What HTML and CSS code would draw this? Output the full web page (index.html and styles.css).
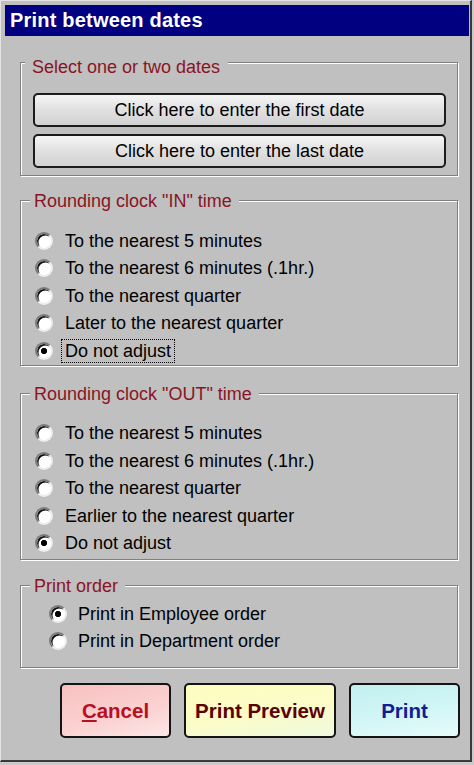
FILE: index.html
```html
<!DOCTYPE html>
<html>
<head>
<meta charset="utf-8">
<title>Print between dates</title>
<link rel="stylesheet" href="styles.css">
</head>
<body>
<div class="window">
  <div class="titlebar">Print between dates</div>
  <div class="content">
    <div class="group g-dates">
      <div class="legend">Select one or two dates</div>
      <div class="date-buttons">
        <button class="date-btn">Click here to enter the first date</button>
        <button class="date-btn">Click here to enter the last date</button>
      </div>
    </div>

    <div class="group g-round g-in">
      <div class="legend">Rounding clock "IN" time</div>
      <ul class="options">
        <li class="option"><span class="radio"></span><span class="label">To the nearest 5 minutes</span></li>
        <li class="option"><span class="radio"></span><span class="label">To the nearest 6 minutes (.1hr.)</span></li>
        <li class="option"><span class="radio"></span><span class="label">To the nearest quarter</span></li>
        <li class="option"><span class="radio"></span><span class="label">Later to the nearest quarter</span></li>
        <li class="option"><span class="radio checked"></span><span class="label focus">Do not adjust</span></li>
      </ul>
    </div>

    <div class="group g-round g-out">
      <div class="legend">Rounding clock "OUT" time</div>
      <ul class="options">
        <li class="option"><span class="radio"></span><span class="label">To the nearest 5 minutes</span></li>
        <li class="option"><span class="radio"></span><span class="label">To the nearest 6 minutes (.1hr.)</span></li>
        <li class="option"><span class="radio"></span><span class="label">To the nearest quarter</span></li>
        <li class="option"><span class="radio"></span><span class="label">Earlier to the nearest quarter</span></li>
        <li class="option"><span class="radio checked"></span><span class="label">Do not adjust</span></li>
      </ul>
    </div>

    <div class="group g-order">
      <div class="legend">Print order</div>
      <ul class="options">
        <li class="option"><span class="radio checked"></span><span class="label">Print in Employee order</span></li>
        <li class="option"><span class="radio"></span><span class="label">Print in Department order</span></li>
      </ul>
    </div>

    <div class="actions">
      <button class="act cancel"><u>C</u>ancel</button>
      <button class="act preview">Print Preview</button>
      <button class="act print">Print</button>
    </div>
  </div>
</div>
</body>
</html>
```

FILE: styles.css
```css
* { box-sizing: border-box; }
html, body { margin: 0; padding: 0; }
body {
  width: 474px;
  height: 765px;
  overflow: hidden;
  background: #cacaca;
  font-family: "Liberation Sans", Arial, sans-serif;
  font-size: 18px;
  color: #000;
}
.window {
  width: 472px;
  height: 762px;
  background: #c0c0c0;
  border-top: 1px solid #e4e4e4;
  border-left: 1px solid #e4e4e4;
  border-right: 2px solid #3a3a3a;
  border-bottom: 2px solid #3a3a3a;
  padding: 4px 1px 0 4px;
}
.titlebar {
  height: 31px;
  line-height: 31px;
  background: #000080;
  color: #fff;
  font-weight: bold;
  font-size: 20px;
  letter-spacing: 0.2px;
  padding-left: 5px;
}
.content { margin: 0 11px 0 15px; }

.group {
  border: 1px solid #808080;
  box-shadow: inset 1px 1px 0 #fff, 1px 1px 0 #fff;
}
.legend {
  display: table;
  background: #c0c0c0;
  color: #8a1424;
  line-height: 20px;
  padding: 0 7px 0 4px;
}

.g-dates { margin-top: 26px; padding: 0 11px 7px 12px; }
.g-dates .legend { margin: -6px 0 0 -8px; padding: 0 8px 0 7px; }
.date-buttons {
  display: flex;
  flex-direction: column;
  gap: 7px;
  margin-top: 16px;
}
.date-btn {
  height: 34px;
  margin: 0;
  padding: 0;
  border: 2px solid #1c1c1c;
  border-radius: 5px;
  background: linear-gradient(#f6f6f6, #e2e2e2 45%, #d2d2d2);
  font-family: "Liberation Sans", Arial, sans-serif;
  font-size: 18px;
  color: #000;
}

.options { list-style: none; margin: 16px 0 0; padding: 0; }
.g-round { padding: 0 0 0 14px; }
.g-round .legend { margin: -10px 0 0 -5px; }
.g-in { margin-top: 24px; }
.g-out { margin-top: 27px; padding-bottom: 2px; }
.option {
  display: flex;
  align-items: center;
  height: 27.5px;
  gap: 12px;
  white-space: nowrap;
}
.g-order { margin-top: 25px; padding: 0 0 12.5px 28px; }
.g-order .legend { margin: -10px 0 0 -19px; }
.g-order .options { margin-top: 4.5px; }
.g-order .option { height: 27px; gap: 11px; }

.radio {
  flex: none;
  width: 18px;
  height: 18px;
  border-radius: 50%;
  border: 2px solid;
  border-color: #7a7a7a #ececec #ececec #7a7a7a;
  background: #fff;
  box-shadow: inset 1.5px 1.5px 0 #111;
}
.radio.checked {
  background: radial-gradient(circle, #000 0 2.8px, #fff 3.4px);
}
.label { line-height: 20px; }
.focus {
  border: 1px dotted #000;
  padding: 1px 3px;
  margin-left: -4px;
}

.actions {
  display: flex;
  justify-content: flex-end;
  gap: 13px;
  margin: 15px -2px 0 0;
}
.act {
  height: 55px;
  margin: 0;
  padding: 0;
  border: 2px solid #141414;
  border-radius: 5px;
  font-family: "Liberation Sans", Arial, sans-serif;
  font-weight: bold;
  font-size: 20.5px;
}
.cancel {
  width: 111px;
  background: linear-gradient(165deg, #f7c0c0, #fbd2d2 60%, #fde6e6);
  color: #b80f22;
}
.cancel u { text-underline-offset: 2px; }
.preview {
  width: 152px;
  background: linear-gradient(170deg, #fdfdc0, #fbfcc8 55%, #eef9de);
  color: #5c0000;
}
.print {
  width: 111px;
  background: linear-gradient(170deg, #c2eff0, #d2f6f6 55%, #e6fbfb);
  color: #111d93;
}
```
